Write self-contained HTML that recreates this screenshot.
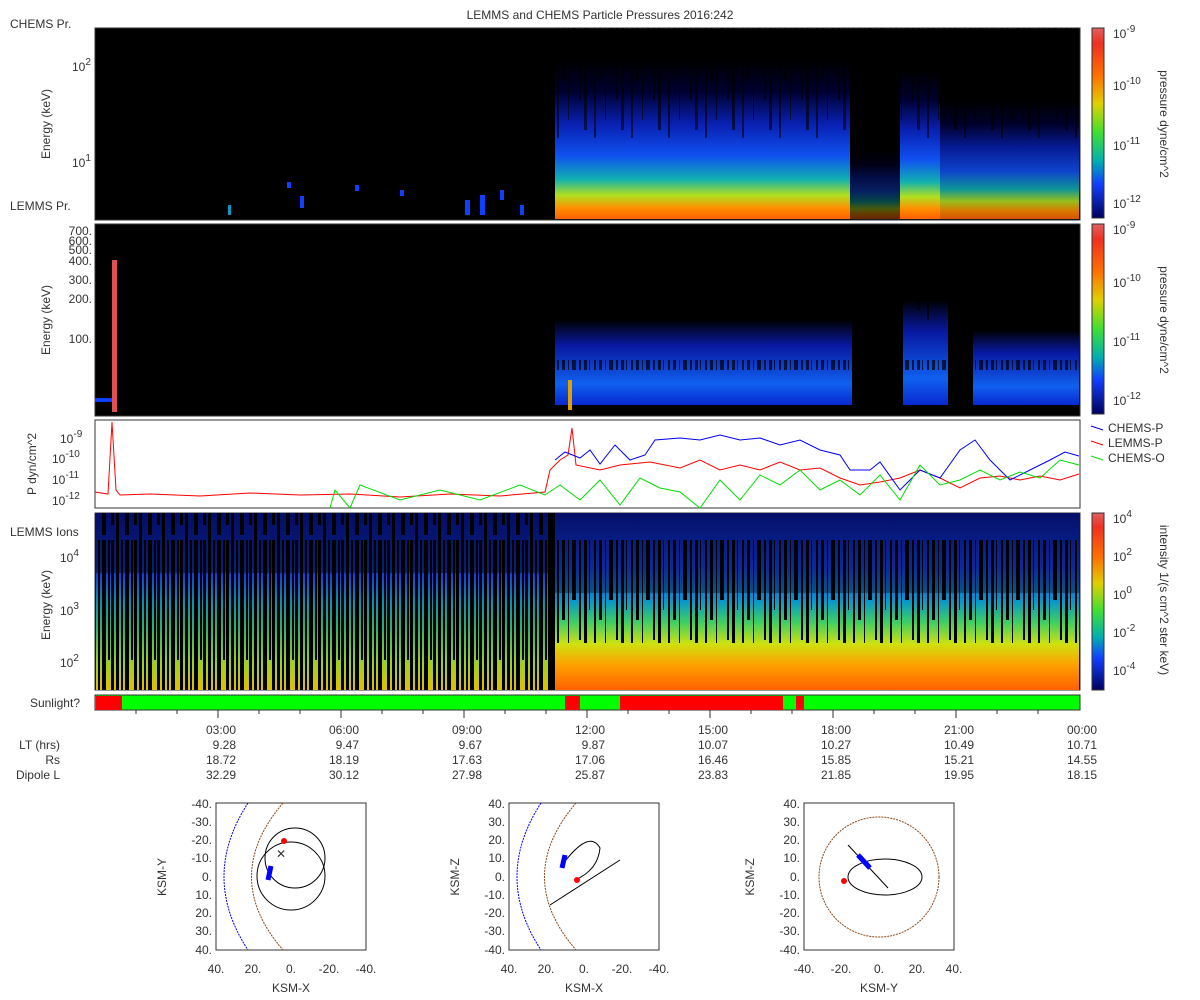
<!DOCTYPE html>
<html><head><style>
body{margin:0;background:#fff;}
svg{display:block;font-family:"Liberation Sans",sans-serif;}
text{fill:#333;font-size:12px;}
</style></head><body>
<svg width="1200" height="1000" viewBox="0 0 1200 1000">
<defs>
<linearGradient id="cb" x1="0" y1="0" x2="0" y2="1">
<stop offset="0" stop-color="#e06060"/><stop offset="0.08" stop-color="#f03020"/><stop offset="0.25" stop-color="#ff7000"/><stop offset="0.4" stop-color="#e0d000"/><stop offset="0.55" stop-color="#40e030"/><stop offset="0.7" stop-color="#00b0b0"/><stop offset="0.82" stop-color="#1040ff"/><stop offset="1" stop-color="#000060"/>
</linearGradient>
<linearGradient id="p1" x1="0" y1="0" x2="0" y2="1">
<stop offset="0" stop-color="#000"/><stop offset="0.2" stop-color="#000030"/><stop offset="0.4" stop-color="#0820b0"/><stop offset="0.6" stop-color="#1050f0"/><stop offset="0.75" stop-color="#10b0b0"/><stop offset="0.85" stop-color="#b0e020"/><stop offset="0.93" stop-color="#ff9000"/><stop offset="1" stop-color="#ff6000"/>
</linearGradient>
<linearGradient id="p2" x1="0" y1="0" x2="0" y2="1">
<stop offset="0" stop-color="#000"/><stop offset="0.3" stop-color="#0818a0"/><stop offset="0.75" stop-color="#1060f0"/><stop offset="1" stop-color="#0828d0"/>
</linearGradient>
<linearGradient id="p4" x1="0" y1="0" x2="0" y2="1">
<stop offset="0" stop-color="#0818a0"/><stop offset="0.3" stop-color="#1040f0"/><stop offset="0.5" stop-color="#0898c8"/><stop offset="0.62" stop-color="#40d060"/><stop offset="0.74" stop-color="#d0e010"/><stop offset="0.86" stop-color="#ffa000"/><stop offset="1" stop-color="#ff6000"/>
</linearGradient>
<linearGradient id="p4l" x1="0" y1="0" x2="0" y2="1">
<stop offset="0" stop-color="#0818c0"/><stop offset="0.35" stop-color="#1040e0"/><stop offset="0.5" stop-color="#0890b0"/><stop offset="0.65" stop-color="#30b070"/><stop offset="0.85" stop-color="#a0d020"/><stop offset="1" stop-color="#e0c000"/>
</linearGradient>
<pattern id="stripes" width="37" height="180" patternUnits="userSpaceOnUse">
<rect x="2" y="0" width="2" height="140" fill="#000"/><rect x="7" y="0" width="3" height="80" fill="#000"/><rect x="13" y="0" width="1" height="120" fill="#000"/><rect x="17" y="0" width="4" height="60" fill="#000"/><rect x="24" y="0" width="2" height="100" fill="#000"/><rect x="29" y="0" width="3" height="130" fill="#000"/><rect x="34" y="0" width="1" height="70" fill="#000"/>
</pattern>
<pattern id="stripesL" width="23" height="180" patternUnits="userSpaceOnUse">
<rect x="1" y="0" width="3" height="180" fill="#000"/><rect x="6" y="0" width="2" height="150" fill="#000"/><rect x="10" y="0" width="4" height="175" fill="#000"/><rect x="16" y="0" width="2" height="120" fill="#000"/><rect x="19" y="0" width="3" height="165" fill="#000"/>
</pattern>
</defs>

<text x="600" y="19" text-anchor="middle">LEMMS and CHEMS Particle Pressures  2016:242</text>

<!-- Panel 1 -->
<text x="10" y="28">CHEMS Pr.</text>
<text x="10" y="210">LEMMS Pr.</text>
<rect x="95" y="28" width="985" height="192" fill="#000" stroke="#333"/>
<rect x="555" y="60" width="295" height="159" fill="url(#p1)"/>
<rect x="850" y="150" width="50" height="69" fill="url(#p1)" opacity="0.4"/>
<rect x="900" y="70" width="40" height="149" fill="url(#p1)"/>
<rect x="940" y="100" width="139" height="119" fill="url(#p1)" opacity="0.85"/>
<rect x="555" y="28" width="525" height="110" fill="url(#stripes)" opacity="0.6"/>
<g fill="#1040ff"><rect x="287" y="182" width="4" height="6"/><rect x="300" y="196" width="4" height="12"/><rect x="355" y="185" width="4" height="6"/><rect x="400" y="190" width="4" height="6"/><rect x="465" y="200" width="5" height="15"/><rect x="480" y="195" width="5" height="20"/><rect x="500" y="190" width="4" height="10"/><rect x="520" y="205" width="4" height="10"/></g>
<rect x="228" y="205" width="3" height="10" fill="#0898c8"/>
<text x="72" y="71" font-size="13">10<tspan dy="-6" font-size="10">2</tspan></text>
<text x="72" y="167" font-size="13">10<tspan dy="-6" font-size="10">1</tspan></text>
<text transform="translate(50,124) rotate(-90)" text-anchor="middle">Energy (keV)</text>

<!-- Panel 2 -->
<rect x="95" y="224" width="985" height="192" fill="#000" stroke="#333"/>
<rect x="555" y="320" width="297" height="85" fill="url(#p2)"/>
<rect x="903" y="300" width="45" height="105" fill="url(#p2)"/>
<rect x="973" y="330" width="106" height="75" fill="url(#p2)"/>
<rect x="555" y="300" width="524" height="70" fill="url(#stripes)" opacity="0.7"/>
<rect x="95" y="398" width="20" height="4" fill="#1040ff"/>
<rect x="112" y="260" width="5" height="152" fill="#e05050"/>
<rect x="568" y="380" width="4" height="30" fill="#e0a000"/>
<g font-size="11" text-anchor="end"><text x="92" y="235">700.</text><text x="92" y="245">600.</text><text x="92" y="254">500.</text><text x="92" y="265">400.</text><text x="92" y="284">300.</text><text x="92" y="303">200.</text><text x="92" y="343">100.</text></g>
<text transform="translate(50,320) rotate(-90)" text-anchor="middle">Energy (keV)</text>

<!-- colorbars -->
<rect x="1092" y="28" width="12" height="190" fill="url(#cb)" stroke="#333"/>
<rect x="1092" y="224" width="12" height="190" fill="url(#cb)" stroke="#333"/>
<rect x="1092" y="513" width="12" height="177" fill="url(#cb)" stroke="#333"/>
<g font-size="13"><text x="1113" y="38">10<tspan dy="-6" font-size="10">-9</tspan></text><text x="1113" y="90">10<tspan dy="-6" font-size="10">-10</tspan></text><text x="1113" y="150">10<tspan dy="-6" font-size="10">-11</tspan></text><text x="1113" y="208">10<tspan dy="-6" font-size="10">-12</tspan></text>
<text x="1113" y="234">10<tspan dy="-6" font-size="10">-9</tspan></text><text x="1113" y="287">10<tspan dy="-6" font-size="10">-10</tspan></text><text x="1113" y="346">10<tspan dy="-6" font-size="10">-11</tspan></text><text x="1113" y="405">10<tspan dy="-6" font-size="10">-12</tspan></text>
<text x="1113" y="523">10<tspan dy="-6" font-size="10">4</tspan></text><text x="1113" y="561">10<tspan dy="-6" font-size="10">2</tspan></text><text x="1113" y="599">10<tspan dy="-6" font-size="10">0</tspan></text><text x="1113" y="637">10<tspan dy="-6" font-size="10">-2</tspan></text><text x="1113" y="675">10<tspan dy="-6" font-size="10">-4</tspan></text></g>
<text transform="translate(1160,124) rotate(90)" text-anchor="middle">pressure dyne/cm^2</text>
<text transform="translate(1160,320) rotate(90)" text-anchor="middle">pressure dyne/cm^2</text>
<text transform="translate(1160,600) rotate(90)" text-anchor="middle">intensity 1/(s cm^2 ster keV)</text>

<!-- Panel 3 line -->
<rect x="95" y="420" width="985" height="88" fill="#fff" stroke="#333"/>
<polyline fill="none" stroke="#ff0000" stroke-width="1" points="95,492 108,494 112,422 116,490 120,495 150,494 200,496 250,493 300,495 350,494 400,497 450,494 500,496 545,492 550,470 560,460 568,455 572,428 576,465 600,470 620,465 650,462 680,468 700,460 720,470 740,465 760,470 780,462 800,470 820,468 840,478 860,485 880,482 900,478 920,470 940,478 960,488 980,478 1000,476 1020,480 1040,476 1060,480 1079,474"/>
<polyline fill="none" stroke="#0000ff" points="555,460 565,452 580,458 590,450 600,464 615,445 630,460 645,455 655,440 680,438 700,440 720,435 740,440 760,438 780,445 800,440 820,450 840,455 850,470 870,470 880,462 900,490 920,470 940,478 960,450 975,440 990,460 1010,480 1030,470 1050,460 1065,452 1079,456"/>
<polyline fill="none" stroke="#00dd00" points="330,508 335,490 350,508 360,485 400,500 440,490 480,500 520,485 545,495 560,485 580,500 600,480 620,505 640,478 660,488 680,492 700,508 720,480 740,500 760,475 780,485 800,470 820,490 840,480 860,495 880,475 900,500 920,465 940,485 960,480 980,470 1000,480 1020,472 1040,478 1060,460 1079,465"/>
<g font-size="13"><text x="60" y="443">10<tspan dy="-6" font-size="10">-9</tspan></text><text x="52" y="463">10<tspan dy="-6" font-size="10">-10</tspan></text><text x="52" y="484">10<tspan dy="-6" font-size="10">-11</tspan></text><text x="52" y="505">10<tspan dy="-6" font-size="10">-12</tspan></text></g>
<text transform="translate(36,464) rotate(-90)" text-anchor="middle">P dyn/cm^2</text>
<line x1="1091" y1="426" x2="1103" y2="430" stroke="#0000ff"/><text x="1108" y="432">CHEMS-P</text>
<line x1="1091" y1="441" x2="1103" y2="445" stroke="#ff0000"/><text x="1108" y="447">LEMMS-P</text>
<line x1="1091" y1="456" x2="1103" y2="460" stroke="#00dd00"/><text x="1108" y="462">CHEMS-O</text>

<!-- Panel 4 -->
<text x="10" y="536">LEMMS Ions</text>
<rect x="95" y="513" width="985" height="177" fill="#000" stroke="#333"/>
<rect x="555" y="513" width="524" height="177" fill="url(#p4)"/>
<rect x="96" y="513" width="452" height="177" fill="url(#p4l)"/>
<rect x="96" y="513" width="452" height="177" fill="url(#stripesL)"/>
<rect x="555" y="513" width="524" height="130" fill="url(#stripes)"/>
<rect x="555" y="513" width="524" height="80" fill="#000" opacity="0.35"/>
<rect x="96" y="513" width="452" height="60" fill="#000" opacity="0.45"/>
<rect x="548" y="513" width="7" height="177" fill="#000"/>
<g font-size="13"><text x="60" y="562">10<tspan dy="-6" font-size="10">4</tspan></text><text x="60" y="615">10<tspan dy="-6" font-size="10">3</tspan></text><text x="60" y="667">10<tspan dy="-6" font-size="10">2</tspan></text></g>
<text transform="translate(50,605) rotate(-90)" text-anchor="middle">Energy (keV)</text>

<!-- Sunlight -->
<text x="80" y="707" text-anchor="end">Sunlight?</text>
<rect x="95" y="695" width="985" height="15" fill="#00ff00" stroke="#333"/>
<rect x="96" y="696" width="26" height="14" fill="#ff0000"/>
<rect x="565" y="696" width="15" height="14" fill="#ff0000"/>
<rect x="620" y="696" width="163" height="14" fill="#ff0000"/>
<rect x="796" y="696" width="8" height="14" fill="#ff0000"/>
<g stroke="#333"><line x1="136" y1="710" x2="136" y2="714"/><line x1="177" y1="710" x2="177" y2="714"/><line x1="218" y1="710" x2="218" y2="718"/><line x1="259" y1="710" x2="259" y2="714"/><line x1="300" y1="710" x2="300" y2="714"/><line x1="341" y1="710" x2="341" y2="718"/><line x1="382" y1="710" x2="382" y2="714"/><line x1="423" y1="710" x2="423" y2="714"/><line x1="464" y1="710" x2="464" y2="718"/><line x1="505" y1="710" x2="505" y2="714"/><line x1="546" y1="710" x2="546" y2="714"/><line x1="587" y1="710" x2="587" y2="718"/><line x1="628" y1="710" x2="628" y2="714"/><line x1="669" y1="710" x2="669" y2="714"/><line x1="710" y1="710" x2="710" y2="718"/><line x1="751" y1="710" x2="751" y2="714"/><line x1="792" y1="710" x2="792" y2="714"/><line x1="833" y1="710" x2="833" y2="718"/><line x1="874" y1="710" x2="874" y2="714"/><line x1="915" y1="710" x2="915" y2="714"/><line x1="956" y1="710" x2="956" y2="718"/><line x1="997" y1="710" x2="997" y2="714"/><line x1="1038" y1="710" x2="1038" y2="714"/></g>
<g text-anchor="end">
<text x="60" y="749">LT (hrs)</text><text x="60" y="764">Rs</text><text x="60" y="779">Dipole L</text>
<text x="236" y="734">03:00</text><text x="236" y="749">9.28</text><text x="236" y="764">18.72</text><text x="236" y="779">32.29</text>
<text x="359" y="734">06:00</text><text x="359" y="749">9.47</text><text x="359" y="764">18.19</text><text x="359" y="779">30.12</text>
<text x="482" y="734">09:00</text><text x="482" y="749">9.67</text><text x="482" y="764">17.63</text><text x="482" y="779">27.98</text>
<text x="605" y="734">12:00</text><text x="605" y="749">9.87</text><text x="605" y="764">17.06</text><text x="605" y="779">25.87</text>
<text x="728" y="734">15:00</text><text x="728" y="749">10.07</text><text x="728" y="764">16.46</text><text x="728" y="779">23.83</text>
<text x="851" y="734">18:00</text><text x="851" y="749">10.27</text><text x="851" y="764">15.85</text><text x="851" y="779">21.85</text>
<text x="974" y="734">21:00</text><text x="974" y="749">10.49</text><text x="974" y="764">15.21</text><text x="974" y="779">19.95</text>
<text x="1097" y="734">00:00</text><text x="1097" y="749">10.71</text><text x="1097" y="764">14.55</text><text x="1097" y="779">18.15</text>
</g>

<!-- Orbit plots -->
<g>
<rect x="216" y="803" width="150" height="147" fill="#fff" stroke="#333"/>
<path d="M248,803 Q200,877 248,950" fill="none" stroke="#0000ff" stroke-dasharray="2,1"/>
<path d="M283,803 Q220,877 283,950" fill="none" stroke="#8b4513" stroke-dasharray="2,1"/>
<circle cx="291" cy="876" r="34" fill="none" stroke="#000"/>
<circle cx="295" cy="858" r="30" fill="none" stroke="#000"/>
<path d="M271,866 L268,880" stroke="#0000ff" stroke-width="5"/>
<circle cx="284" cy="841" r="3" fill="#f00"/>
<text x="276" y="858" fill="#f00" font-size="9">✕</text>
</g>
<g>
<rect x="509" y="803" width="150" height="147" fill="#fff" stroke="#333"/>
<path d="M541,803 Q493,877 541,950" fill="none" stroke="#0000ff" stroke-dasharray="2,1"/>
<path d="M576,803 Q513,877 576,950" fill="none" stroke="#8b4513" stroke-dasharray="2,1"/>
<path d="M550,905 L620,860" stroke="#000" fill="none"/>
<path d="M566,860 Q590,830 600,848 Q598,870 575,880" fill="none" stroke="#000"/>
<path d="M565,855 L562,868" stroke="#0000ff" stroke-width="5"/>
<circle cx="577" cy="880" r="3" fill="#f00"/>
</g>
<g>
<rect x="804" y="803" width="150" height="147" fill="#fff" stroke="#333"/>
<circle cx="879" cy="877" r="60" fill="none" stroke="#8b4513" stroke-dasharray="2,1"/>
<ellipse cx="885" cy="877" rx="37" ry="18" fill="none" stroke="#000"/>
<path d="M848,845 L888,888" stroke="#000" fill="none"/>
<path d="M858,855 L870,868" stroke="#0000ff" stroke-width="5"/>
<circle cx="844" cy="881" r="3" fill="#f00"/>
</g>
<g font-size="12" text-anchor="end">
<text x="212" y="808">-40.</text><text x="212" y="826">-30.</text><text x="212" y="844">-20.</text><text x="212" y="862">-10.</text><text x="212" y="881">0.</text><text x="212" y="899">10.</text><text x="212" y="917">20.</text><text x="212" y="935">30.</text><text x="212" y="954">40.</text>
<text x="505" y="808">40.</text><text x="505" y="826">30.</text><text x="505" y="844">20.</text><text x="505" y="862">10.</text><text x="505" y="881">0.</text><text x="505" y="899">-10.</text><text x="505" y="917">-20.</text><text x="505" y="935">-30.</text><text x="505" y="954">-40.</text>
<text x="800" y="808">40.</text><text x="800" y="826">30.</text><text x="800" y="844">20.</text><text x="800" y="862">10.</text><text x="800" y="881">0.</text><text x="800" y="899">-10.</text><text x="800" y="917">-20.</text><text x="800" y="935">-30.</text><text x="800" y="954">-40.</text>
</g>
<g font-size="12" text-anchor="middle">
<text x="216" y="973">40.</text><text x="253" y="973">20.</text><text x="291" y="973">0.</text><text x="329" y="973">-20.</text><text x="366" y="973">-40.</text>
<text x="509" y="973">40.</text><text x="546" y="973">20.</text><text x="584" y="973">0.</text><text x="622" y="973">-20.</text><text x="659" y="973">-40.</text>
<text x="804" y="973">-40.</text><text x="841" y="973">-20.</text><text x="879" y="973">0.</text><text x="917" y="973">20.</text><text x="954" y="973">40.</text>
<text x="291" y="992">KSM-X</text><text x="584" y="992">KSM-X</text><text x="879" y="992">KSM-Y</text>
</g>
<text transform="translate(166,877) rotate(-90)" text-anchor="middle">KSM-Y</text>
<text transform="translate(459,877) rotate(-90)" text-anchor="middle">KSM-Z</text>
<text transform="translate(754,877) rotate(-90)" text-anchor="middle">KSM-Z</text>
</svg>
</body></html>
